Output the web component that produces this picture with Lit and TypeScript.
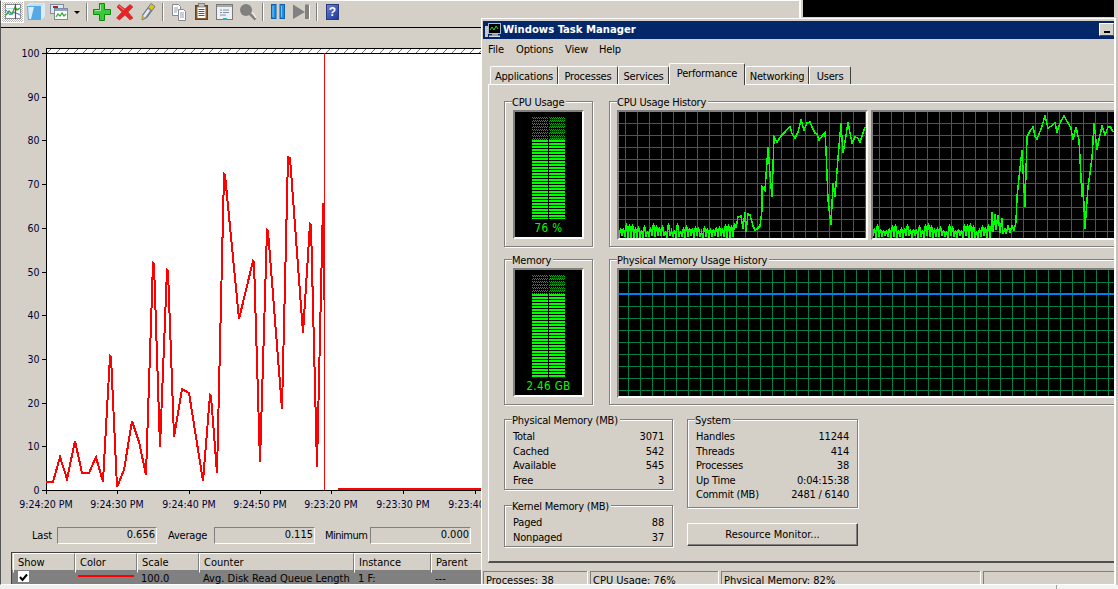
import { LitElement, html, css, svg } from "lit";
import { customElement } from "lit/decorators.js";

const DISK: [number, number][] = [
  [46, 482], [53, 482], [60, 457], [67, 479], [75, 441], [82, 473], [89, 473], [96, 457], [103, 482], [104, 463],
  [110, 356], [111, 357], [117, 487], [124, 470], [132, 421], [139, 442], [146, 475], [148, 413], [153, 263], [154, 264],
  [160, 447], [167, 270], [168, 271], [174, 437], [182, 389], [189, 393], [203, 481], [210, 395], [211, 396], [217, 473],
  [224, 174], [225, 175], [239, 319], [253, 261], [254, 262], [260, 462], [267, 230], [268, 231], [282, 409], [288, 157], [290, 158],
  [303, 333], [310, 224], [311, 225], [317, 467], [323, 203], [324, 300],
];

const CPU1: [number, number][] = [
  [736, 228], [738, 217], [741, 216], [743, 229], [745, 212], [746, 232], [748, 214], [750, 215], [753, 226], [757, 229], [760, 226], [762, 210], [762, 187], [765, 190], [768, 147], [772, 197], [774, 137],
  [777, 142], [785, 132], [790, 127], [795, 138], [801, 120], [804, 130], [810, 122], [815, 133], [819, 140], [825, 133],
  [826, 150], [828, 200], [831, 225], [833, 183], [835, 197], [838, 158], [841, 123], [843, 153], [848, 122], [852, 143],
  [855, 137], [860, 142], [863, 133], [865, 127],
];

const CPU2: [number, number][] = [
  [992, 212], [993, 232], [995, 214], [996, 230], [998, 215], [1000, 233], [1002, 218], [1003, 234], [1005, 228], [1006, 234],
  [1008, 226], [1010, 232], [1012, 226], [1014, 230], [1016, 222], [1017, 197], [1022, 150], [1025, 207], [1027, 137],
  [1033, 127], [1037, 139], [1045, 116], [1048, 128], [1055, 123], [1057, 132], [1064, 116], [1071, 128], [1073, 140],
  [1076, 127], [1079, 140], [1082, 197], [1083, 183], [1085, 229], [1088, 187], [1092, 158], [1094, 123], [1097, 150],
  [1102, 126], [1105, 135], [1108, 127], [1113, 132],
];

function trace(x0: number, keys: [number, number][], seed: number): string {
  let s = seed;
  const rnd = () => {
    s = (s * 16807) % 2147483647;
    return (s % 1000) / 1000;
  };
  const pts: string[] = [];
  let up = false;
  for (let x = x0; x < keys[0][0]; x += 1.5) {
    const y = up ? 232 - rnd() * 9 : 236 + rnd() * 2;
    pts.push(`${x},${y.toFixed(0)}`);
    up = !up;
  }
  for (let i = 0; i < keys.length; i++) {
    const [x, y] = keys[i];
    pts.push(`${x},${y}`);
    if (i < keys.length - 1) {
      const [nx, ny] = keys[i + 1];
      if (nx - x >= 4) {
        const mx = (x + nx) / 2;
        pts.push(`${mx},${((y + ny) / 2 + (rnd() - 0.5) * 6).toFixed(0)}`);
      }
    }
  }
  return pts.join(" ");
}

function range(start: number, end: number, step: number): number[] {
  const out: number[] = [];
  for (let v = start; v < end; v += step) out.push(v);
  return out;
}

function graph(x: number, y: number, w: number, h: number, vx: number, hy: number, content: unknown) {
  return html`<svg class="sunken graph" width=${w} height=${h} viewBox="${x} ${y} ${w} ${h}">
    <rect x=${x} y=${y} width=${w} height=${h} fill="#000"></rect>
    ${range(vx, x + w, 12).map((v) => svg`<line x1=${v + 0.5} x2=${v + 0.5} y1=${y} y2=${y + h} stroke="#008048"></line>`)}
    ${range(hy, y + h, 12).map((v) => svg`<line x1=${x} x2=${x + w} y1=${v + 0.5} y2=${v + 0.5} stroke="#008048"></line>`)}
    ${content}
  </svg>`;
}

function gauge(dim: number, lit: number, label: string) {
  const col = html`<div class="col"><div class="dim" style="height:${dim}px"></div><div class="lit" style="height:${lit}px"></div></div>`;
  return html`<div class="sunken gauge">
    <div class="bars">${col}${col}</div>
    <div class="gauge-text">${label}</div>
  </div>`;
}

const ICONS = {
  graph: svg`<rect x="1.5" y="1.5" width="15" height="14" fill="#fff" stroke="#7d8ba0"/><path d="M1 5.5H17M1 10.5H17" stroke="#c8d4e4"/><path d="M2 12 5 8l3 3 3-7 2 3 3-2" fill="none" stroke="#28a828" stroke-width="1.3"/><path d="M2 7 6 12l4-3 6 3" fill="none" stroke="#3a7fd0"/><path d="M11.5 1v15" stroke="#e01818" stroke-width="1.2"/>`,
  cube: svg`<path d="M0 3 4 0h14v13l-4 4H1z" fill="#bfe0f4"/><path d="M0 3h14v14H1z" fill="#58a8e4"/><path d="M1 4h6L4 16H2z" fill="#d8eefa"/><path d="M14 3l4-3v13l-4 4z" fill="#dcecf6"/><path d="M0 3 4 0h14" fill="none" stroke="#eef6fb"/>`,
  report: svg`<rect x="0.5" y="1.5" width="13" height="9" fill="#dfe6f0" stroke="#7d8ba0"/><rect x="3" y="3" width="5" height="2" fill="#a02828"/><rect x="4.5" y="5.5" width="13" height="11" fill="#fff" stroke="#7d8ba0"/><rect x="5" y="6" width="12" height="2" fill="#8aa4c8"/><path d="M6 14l2-3 2 2 2-3 2 3 2-2" fill="none" stroke="#38a838" stroke-width="1.3"/>`,
  plus: svg`<path d="M6.5 .5h5v6h6v5h-6v6h-5v-6h-6v-5h6z" fill="#3cc83c" stroke="#0c8a0c"/><path d="M7.5 2v5.500H2" fill="none" stroke="#a8f0a0"/>`,
  x: svg`<path d="M3 1.500 9 6l5-4.500 3 2.500-5 5 5 6-3 2-5-5-5.500 5L.5 15l5.500-6L1 4z" fill="#e82424" stroke="#b83030" stroke-width=".6"/><path d="M3 3l5 4" stroke="#f89090"/>`,
  pen: svg`<path d="M12 .5l4 3-8 11-5 2.500 .5-5z" fill="#7c8aa0" stroke="#566070" stroke-width=".7"/><path d="M12 1l3.500 2.500-2.500 3.500-3.500-2.500z" fill="#d8c810"/><path d="M3.500 12l3 2.500L3 17z" fill="#c8b810"/><path d="M9 6l2 1.500-5 7-2-1.500z" fill="#e8ecf2"/>`,
  copy: svg`<path d="M2.500 1.500h6l2 2v9h-8z" fill="#fff" stroke="#8a8a8a"/><path d="M4 5h4M4 7h4M4 9h3" stroke="#88a0b8"/><path d="M8.500 6.500h5l2 2v9h-7z" fill="#fff" stroke="#8a8a8a"/><path d="M10 10h4M10 12h4M10 14h4" stroke="#88a0b8"/>`,
  paste: svg`<rect x="2.500" y="2.500" width="12" height="14" fill="#8a5a30" stroke="#6a4020"/><rect x="4.500" y="4" width="8" height="11" fill="#fff"/><rect x="5.500" y=".5" width="6" height="3.500" fill="#c0c0c0" stroke="#6a6a6a" stroke-width=".7"/><path d="M5.500 6.500h6M5.500 8.500h6M5.500 10.500h6M5.500 12.500h6" stroke="#555"/>`,
  props: svg`<rect x=".5" y="1.500" width="16" height="15" fill="#eef0f4" stroke="#7a7a7a"/><rect x="1" y="2" width="15" height="2" fill="#a8a8a8"/><path d="M4 7h2M7 7h6M4 9.500h2M7 9.500h6M4 12h6" stroke="#8090a4"/><rect x="7" y="15" width="4" height="2" fill="#30b0c8"/>`,
  zoom: svg`<circle cx="7" cy="7" r="6" fill="#808080"/><path d="M11 11l5.500 5.500" stroke="#808080" stroke-width="2.500"/><path d="M13.500 9.500 17 15" stroke="#fff"/>`,
  pause: svg`<rect x="1.500" y="1.500" width="4.500" height="14" fill="#1e90e0" stroke="#1460a8"/><rect x="10" y="1.500" width="4.500" height="14" fill="#1e90e0" stroke="#1460a8"/><path d="M3 3v11M11.500 3v11" stroke="#70c4f8"/>`,
  skip: svg`<path d="M0 1.500 12 9 0 16z" fill="#808080"/><rect x="12" y="1.500" width="4" height="14.500" fill="#808080"/><path d="M16.500 2v14.500" stroke="#fff"/>`,
};

function icon(body: unknown, cls = "") {
  return html`<span class="btn ${cls}"><svg width="18" height="18" viewBox="0 0 18 18">${body}</svg></span>`;
}

@customElement("app-root")
export class AppRoot extends LitElement {
  static styles = css`
    :host {
      display: block;
      width: 1118px;
      height: 589px;
      font-family: "DejaVu Sans Condensed", "DejaVu Sans", sans-serif;
      font-stretch: condensed;
      font-size: 11px;
      color: #000;
    }
    * { box-sizing: border-box; }
    .desk {
      position: relative;
      width: 1118px;
      height: 589px;
      overflow: hidden;
      background: #f0f0f0;
    }
    .black {
      position: absolute;
      left: 803px;
      top: 0;
      width: 311px;
      height: 17px;
      background: #000;
    }
    .backing {
      position: absolute;
      left: 801px;
      top: 0;
      width: 317px;
      height: 585px;
      background: #d4d0c8;
    }
    .corner {
      position: absolute;
      left: 1056px;
      top: 585px;
      width: 62px;
      height: 4px;
      border-left: 1px solid #a0a0a0;
      background: #f4f4f4;
    }
    .perf {
      position: absolute;
      left: 0;
      top: 0;
      width: 801px;
      height: 585px;
      background: #d4d0c8;
      border-left: 1px solid #555;
      border-right: 2px solid #fff;
      border-top: 1px solid #fff;
      border-bottom: 1px solid #fff;
      overflow: hidden;
      display: flex;
      flex-direction: column;
    }
    .toolbar {
      flex: none;
      height: 27px;
      border-bottom: 1px solid #000;
      display: flex;
      align-items: center;
      padding-bottom: 4px;
    }
    .btn {
      width: 23px;
      height: 22px;
      flex: none;
      display: flex;
      align-items: center;
      justify-content: center;
    }
    .btn.on {
      border: 1px solid #fff;
      background: repeating-conic-gradient(#fff 0 25%, #b8b4ac 0 50%) 0 0/2px 2px;
    }
    .dd {
      width: 13px;
      height: 22px;
      flex: none;
      display: flex;
      align-items: center;
      justify-content: center;
    }
    .dd i {
      width: 0;
      height: 0;
      border-left: 3px solid transparent;
      border-right: 3px solid transparent;
      border-top: 3px solid #000;
    }
    .sep {
      width: 2px;
      height: 18px;
      flex: none;
      margin: 0 3px;
      border-left: 1px solid #808080;
      border-right: 1px solid #fff;
    }
    .sep.tight { margin-right: 2px; }
    .help {
      width: 13px;
      height: 16px;
      display: flex;
      align-items: center;
      justify-content: center;
      background: linear-gradient(135deg, #6a80d0, #1c3a9c);
      border: 1px solid #2a3a80;
      color: #fff;
      font: bold 12px "Liberation Sans", sans-serif;
    }
    .chart { flex: none; display: block; font-size: 10.5px; }
    .chart text { fill: #000030; font-family: "DejaVu Sans Condensed", "DejaVu Sans", sans-serif; font-stretch: condensed; }
    .stats {
      flex: none;
      height: 14px;
      margin-top: 2px;
      display: grid;
      grid-template-columns: 25px 100px 57px 101px 55px 101px;
      padding-left: 31px;
      line-height: 17px;
      white-space: nowrap;
      letter-spacing: -0.2px;
    }
    .stats .v {
      border: 1px solid;
      border-color: #808080 #fff #fff #808080;
      text-align: right;
      padding-right: 1px;
      line-height: 14px;
      letter-spacing: 0;
    }
    .stats .l2 { padding-left: 11px; }
    .stats .l3 { padding-left: 10px; letter-spacing: -0.5px; }
    .table {
      flex: none;
      margin: 11px 0 0 10px;
      border-left: 1px solid #404040;
      border-top: 1px solid #404040;
      padding-left: 1px;
      width: 780px;
    }
    .thead, .trow {
      display: grid;
      grid-template-columns: 62px 62px 62px 155px 77px 77px 100px;
      white-space: nowrap;
    }
    .thead { height: 17px; }
    .thead div {
      border: 1px solid;
      border-color: #fff #808080 #808080 #fff;
      padding-left: 4px;
      line-height: 18px;
    }
    .trow { height: 14px; background: #808080; line-height: 17px; margin-left: -1px; padding-left: 1px; }
    .trow > div { padding-left: 4px; }
    .check {
      display: block;
      width: 11px;
      height: 11px;
      margin: 1px 0 0 1px;
      background: #fff;
    }
    .swatch {
      display: block;
      height: 2px;
      width: 56px;
      margin: 5px 0 0 -1px;
      background: #f00;
    }

    .tm {
      position: absolute;
      left: 481px;
      top: 18px;
      width: 635px;
      height: 567px;
      background: #d4d0c8;
      border: 1px solid #fff;
      border-right-width: 2px;
      border-left-width: 1px;
      padding: 2px 0 0 1px;
      overflow: hidden;
      display: flex;
      flex-direction: column;
      box-shadow: 2px 0 0 #c8c4bc;
    }
    .title {
      flex: none;
      height: 18px;
      background: #04276a;
      color: #fff;
      font-weight: bold;
      font-size: 11.2px;
      display: flex;
      align-items: center;
      padding-left: 2px;
      gap: 2px;
      line-height: 18px;
    }
    .title span { flex: 1; }
    .min {
      flex: none;
      width: 15px;
      height: 13px;
      background: #d4d0c8;
      border: 1px solid;
      border-color: #fff #808080 #404040 #fff;
      margin-top: -1px;
      display: flex;
      align-items: flex-end;
      justify-content: center;
      padding-bottom: 2px;
    }
    .min i { width: 6px; height: 2px; background: #000; }
    .menu {
      flex: none;
      display: flex;
      height: 20px;
      padding-left: 5px;
      line-height: 22px;
      letter-spacing: -0.15px;
    }
    .menu span:nth-child(1) { width: 28px; }
    .menu span:nth-child(2) { width: 49px; }
    .menu span:nth-child(3) { width: 34px; }
    .tabs {
      flex: none;
      height: 25px;
      margin-left: 7px;
      display: grid;
      grid-template-columns: 68px 60px 51px 76px 64px 42px;
      align-items: end;
      position: relative;
      z-index: 1;
      text-align: center;
      letter-spacing: -0.2px;
    }
    .tab {
      height: 18px;
      line-height: 19px;
      border: 1px solid;
      border-color: #fff #404040 transparent #fff;
      border-bottom: 0;
      border-top-left-radius: 2px;
      border-top-right-radius: 2px;
    }
    .tab.sel {
      height: 22px;
      margin-bottom: -1px;
      background: #d4d0c8;
      line-height: 20px;
    }
    .page {
      flex: none;
      height: 479px;
      margin-left: 5px;
      border-top: 1px solid #fff;
      border-left: 1px solid #fff;
      border-bottom: 2px solid #505050;
      padding: 16px 0 0 15px;
      display: grid;
      grid-template-columns: 89px 520px;
      grid-template-rows: 146px 146px auto;
      column-gap: 16px;
      row-gap: 12px;
      letter-spacing: -0.2px;
    }
    .group {
      border: 1px solid #808080;
      box-shadow: inset 1px 1px 0 #fff, 1px 1px 0 #fff;
      min-width: 0;
    }
    .legend {
      width: fit-content;
      margin: -6px 0 -2px 7px;
      padding: 0 2px 0 0;
      height: 14px;
      line-height: 14px;
      background: #d4d0c8;
      white-space: nowrap;
    }
    .sunken {
      border: 2px solid;
      border-color: #808080 #fff #fff #808080;
    }
    .gauge {
      width: 71px;
      height: 129px;
      margin: 2px 0 0 8px;
      background: #000;
      display: flex;
      flex-direction: column;
      align-items: center;
      padding-top: 4px;
      letter-spacing: 0.4px;
    }
    .bars { display: grid; grid-template-columns: 16px 16px; column-gap: 1px; }
    .dim {
      background:
        repeating-linear-gradient(#000 0 1px, transparent 1px 3px),
        repeating-conic-gradient(#00b000 0 25%, #000 0 50%) 0 0/2px 2px;
    }
    .lit { background: repeating-linear-gradient(#00ff00 0 2px, #000 2px 3px); }
    .gauge-text {
      margin-top: 2px;
      color: #00ff00;
      font-size: 11.5px;
      line-height: 14px;
    }
    .graphs {
      display: flex;
      gap: 3px;
      margin: 2px 0 0 7px;
    }
    .graph { display: block; flex: none; overflow: hidden; box-sizing: content-box; }
    .lower {
      grid-column: 1 / 3;
      margin-top: 2px;
      display: grid;
      grid-template-columns: 169px 171px;
      column-gap: 14px;
      align-items: start;
    }
    .stack { display: flex; flex-direction: column; gap: 15px; }
    .rows { padding: 4px 8px 0 8px; }
    .row {
      display: flex;
      justify-content: space-between;
      height: 14.5px;
      line-height: 14.5px;
      white-space: nowrap;
    }
    .phys { height: 71px; }
    .kern { height: 42px; }
    .sys { height: 89px; }
    .res {
      height: 23px;
      margin-top: 15px;
      border: 1px solid;
      border-color: #fff #404040 #404040 #fff;
      box-shadow: inset -1px -1px 0 #808080;
      text-align: center;
      line-height: 22px;
      letter-spacing: 0;
    }
    .status {
      flex: none;
      height: 13px;
      margin-top: 8px;
      display: grid;
      grid-template-columns: 104px 128px 259px 140px;
      column-gap: 3px;
      line-height: 18px;
      white-space: nowrap;
      overflow: hidden;
    }
    .status div {
      height: 20px;
      padding-left: 2px;
      border-top: 1px solid #808080;
      border-left: 1px solid #808080;
      box-shadow: 1px 0 0 #fff;
    }
  `;

  render() {
    const yTicks = range(0, 11, 1);
    const xLabels: [number, string][] = [
      [46, "9:24:20 PM"], [117, "9:24:30 PM"], [189, "9:24:40 PM"], [260, "9:24:50 PM"],
      [331, "9:23:20 PM"], [403, "9:23:30 PM"], [475, "9:23:40 PM"],
    ];
    const cpu1 = svg`<polyline points=${trace(619, CPU1, 1234)} fill="none" stroke="#00ff00" stroke-width="1.5" shape-rendering="crispEdges"></polyline>`;
    const cpu2 = svg`<polyline points=${trace(873, CPU2, 777)} fill="none" stroke="#00ff00" stroke-width="1.5" shape-rendering="crispEdges"></polyline>`;
    const memLine = svg`<rect x="619" y="293" width="500" height="2" fill="#0080f0"></rect>`;
    const row = (k: string, v: string) => html`<div class="row"><span>${k}</span><span>${v}</span></div>`;

    return html`<div class="desk">
      <div class="backing"></div>
      <div class="black"></div>
      <div class="corner"></div>

      <section class="perf">
        <div class="toolbar">
          ${icon(ICONS.graph, "on")} ${icon(ICONS.cube)} ${icon(ICONS.report)}
          <span class="dd"><i></i></span>
          <span class="sep tight"></span>
          ${icon(ICONS.plus)} ${icon(ICONS.x)} ${icon(ICONS.pen)}
          <span class="sep"></span>
          ${icon(ICONS.copy)} ${icon(ICONS.paste)} ${icon(ICONS.props)} ${icon(ICONS.zoom)}
          <span class="sep"></span>
          ${icon(ICONS.pause)} ${icon(ICONS.skip)}
          <span class="sep"></span>
          <span class="btn"><span class="help">?</span></span>
        </div>

        <svg class="chart" width="798" height="497" viewBox="1 28 798 497">
          <defs>
            <pattern id="hatch" width="9" height="5" patternUnits="userSpaceOnUse" x="46" y="48">
              <rect width="9" height="5" fill="#fff"></rect>
              <path d="M1 5 5 1" stroke="#707070" stroke-width="1"></path>
            </pattern>
          </defs>
          <rect x="46" y="48" width="760" height="5" fill="url(#hatch)"></rect>
          <rect x="46" y="53" width="760" height="437" fill="#fff"></rect>
          <path d="M46 48.500H806M46 53.500H806M46.500 48V490M46 490.500H806" stroke="#000" fill="none"></path>
          ${yTicks.map((i) => {
            const y = Math.round(490 - i * 43.7);
            return svg`<path d=${`M42 ${y + 0.5}H46`} stroke="#000"></path>
              <text x="39.500" y=${y + 4} text-anchor="end">${String(i * 10)}</text>`;
          })}
          ${xLabels.map(
            ([x, t]) => svg`<path d=${`M${x + 0.5} 490V494`} stroke="#000"></path>
              <text x=${x} y="508" text-anchor="middle">${t}</text>`
          )}
          <path d="M324.500 53V490" stroke="#f00"></path>
          <polyline points=${DISK.map((p) => p.join(",")).join(" ")} fill="none" stroke="#f00" stroke-width="2" shape-rendering="crispEdges"></polyline>
          <rect x="338" y="488" width="460" height="2" fill="#f00"></rect>
        </svg>

        <div class="stats">
          <span>Last</span><span class="v">0.656</span>
          <span class="l2">Average</span><span class="v">0.115</span>
          <span class="l3">Minimum</span><span class="v">0.000</span>
        </div>

        <div class="table">
          <div class="thead">
            <div>Show</div><div>Color</div><div>Scale</div><div>Counter</div><div>Instance</div><div>Parent</div><div>Object</div>
          </div>
          <div class="trow">
            <div>
              <span class="check"><svg width="11" height="11" viewBox="0 0 11 11"><path d="M2 5l2.500 3L9 2.500" fill="none" stroke="#000" stroke-width="2"></path></svg></span>
            </div>
            <div><span class="swatch"></span></div>
            <div>100.0</div>
            <div>Avg. Disk Read Queue Length</div>
            <div>1 F:</div>
            <div>---</div>
            <div></div>
          </div>
        </div>
      </section>

      <section class="tm">
        <div class="title">
          <svg width="16" height="16" viewBox="0 0 16 16">
            <rect x="0" y="4" width="3" height="11" fill="#c8c8c8"></rect>
            <rect x="3.500" y="1.500" width="12" height="10" fill="#000" stroke="#b0b8c0"></rect>
            <path d="M5 8l2-3 2 3 2-4 2 3" fill="none" stroke="#20e020"></path>
            <rect x="7" y="12" width="6" height="1.500" fill="#a0a8b0"></rect>
            <rect x="4" y="13.500" width="11" height="1.500" fill="#d8d8d8"></rect>
          </svg>
          <span>Windows Task Manager</span>
          <div class="min"><i></i></div>
        </div>
        <div class="menu"><span>File</span><span>Options</span><span>View</span><span>Help</span></div>
        <div class="tabs">
          <div class="tab">Applications</div>
          <div class="tab">Processes</div>
          <div class="tab">Services</div>
          <div class="tab sel">Performance</div>
          <div class="tab">Networking</div>
          <div class="tab">Users</div>
        </div>
        <div class="page">
          <div class="group">
            <div class="legend">CPU Usage</div>
            ${gauge(24, 79, "76 %")}
          </div>
          <div class="group">
            <div class="legend">CPU Usage History</div>
            <div class="graphs">
              ${graph(619, 112, 247, 126, 625, 123, cpu1)}
              ${graph(873, 112, 247, 126, 879, 123, cpu2)}
            </div>
          </div>
          <div class="group">
            <div class="legend">Memory</div>
            ${gauge(20, 83, "2.46 GB")}
          </div>
          <div class="group">
            <div class="legend">Physical Memory Usage History</div>
            <div class="graphs">
              ${graph(619, 270, 500, 126, 628, 282, memLine)}
            </div>
          </div>
          <div class="lower">
            <div class="stack">
              <div class="group phys">
                <div class="legend">Physical Memory (MB)</div>
                <div class="rows">
                  ${row("Total", "3071")}${row("Cached", "542")}${row("Available", "545")}${row("Free", "3")}
                </div>
              </div>
              <div class="group kern">
                <div class="legend">Kernel Memory (MB)</div>
                <div class="rows">${row("Paged", "88")}${row("Nonpaged", "37")}</div>
              </div>
            </div>
            <div>
              <div class="group sys">
                <div class="legend">System</div>
                <div class="rows">
                  ${row("Handles", "11244")}${row("Threads", "414")}${row("Processes", "38")}${row("Up Time", "0:04:15:38")}${row("Commit (MB)", "2481 / 6140")}
                </div>
              </div>
              <div class="res">Resource Monitor...</div>
            </div>
          </div>
        </div>
        <div class="status">
          <div>Processes: 38</div>
          <div>CPU Usage: 76%</div>
          <div>Physical Memory: 82%</div>
          <div></div>
        </div>
      </section>
    </div>`;
  }
}
